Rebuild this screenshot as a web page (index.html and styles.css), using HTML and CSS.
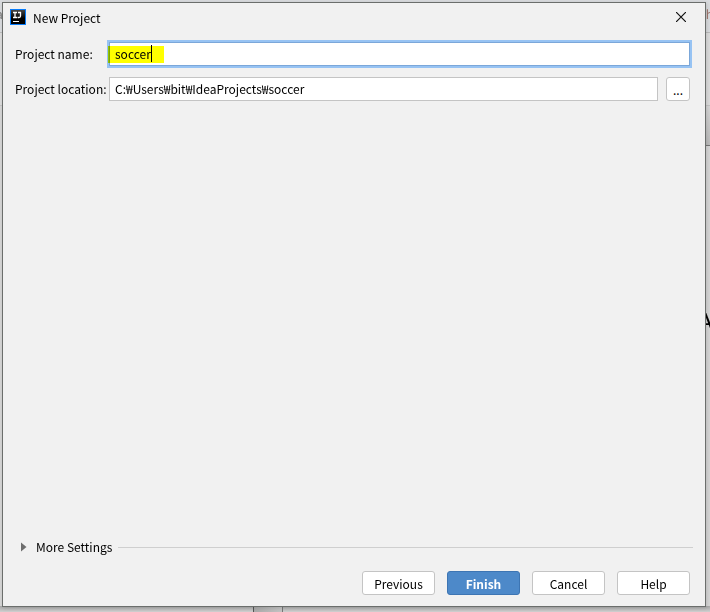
FILE: index.html
```html
<!DOCTYPE html>
<html lang="en">
<head>
  <meta charset="UTF-8">
  <title>New Project</title>
  <link rel="stylesheet" href="styles.css">
</head>
<body>

<!-- window behind the dialog -->
<div class="backdrop" aria-hidden="true">
  <span class="behind left-text">a</span>
  <span class="behind right-text">ch</span>
  <span class="behind big-text">A</span>
  <div class="band"></div>
  <div class="edge"></div>
  <div class="pane"></div>
</div>

<form class="dialog">
  <header class="titlebar">
    <svg class="logo" width="16" height="16" viewBox="0 0 16 16">
      <defs>
        <linearGradient id="logo-fill" x1="0" y1="0" x2="0" y2="1">
          <stop offset="0" stop-color="#444"/>
          <stop offset="0.6" stop-color="#000"/>
        </linearGradient>
      </defs>
      <rect width="16" height="16" fill="#087cfa"/>
      <rect x="1" y="1" width="14" height="14" fill="url(#logo-fill)"/>
      <path d="M3 3.500h4M5 3.500v5M3 8.500h4M8 3.500h3M10.500 3v4q0 1.500-1.500 1.500h-1.500" fill="none" stroke="#fff" stroke-width="1.300"/>
      <path d="M3 12.500h6" stroke="#fff"/>
    </svg>
    <h1>New Project</h1>
    <button type="button" class="close" aria-label="Close">
      <svg width="10" height="10" viewBox="0 0 10 10"><path d="M0 0L10 10M10 0L0 10" stroke="#111" stroke-width="1.200"/></svg>
    </button>
  </header>

  <div class="fields">
    <label for="name">Project name:</label>
    <div class="field">
      <input id="name" class="focused" type="text" value="soccer">
      <span class="marker"></span>
      <span class="caret"></span>
    </div>
    <label for="location">Project location:</label>
    <div class="field">
      <input id="location" type="text" value="C:₩Users₩bit₩IdeaProjects₩soccer">
      <button type="button" class="browse" aria-label="Browse">...</button>
    </div>
  </div>

  <div class="more">
    <button type="button" class="toggle">
      <svg width="6" height="10" viewBox="0 0 6 10"><path d="M0 0.500L5.500 5L0 9.500z" fill="#6e6e6e"/></svg>
      More Settings
    </button>
    <hr>
  </div>

  <footer class="actions">
    <button type="button">Previous</button>
    <button type="submit" class="primary">Finish</button>
    <button type="button">Cancel</button>
    <button type="button">Help</button>
  </footer>
</form>

</body>
</html>
```

FILE: styles.css
```css
* {
  box-sizing: border-box;
}
body {
  margin: 0;
  padding: 2px 4px 5px 2px;
  height: 100vh;
  display: flex;
  background: #d6d6d6;
  font-family: "Noto Sans CJK KR", "Noto Sans", sans-serif;
  font-size: 12px;
  line-height: 16px;
  color: #000;
}
button, input {
  font: inherit;
  color: inherit;
}

.backdrop {
  position: absolute;
  inset: 0;
  overflow: hidden;
  background: linear-gradient(#d9dbde 0 32px, #bcbcbc 32px 33px, #dcdcdc 33px 105px, #c4c4c4 105px 106px, #d6d6d6 106px);
}
.behind {
  position: absolute;
  color: #777;
}
.left-text {
  left: -4px;
  top: 6px;
}
.right-text {
  right: -3px;
  top: 6px;
  color: #a0766c;
}
.big-text {
  right: -3px;
  top: 307px;
  font-family: "Liberation Sans", sans-serif;
  font-size: 24px;
  line-height: 30px;
  color: #000;
}
.band {
  position: absolute;
  right: 0;
  top: 106px;
  width: 6px;
  height: 40px;
  background: linear-gradient(#d6d6d6, #bbb);
  border-bottom: 1px solid #777;
}
.edge {
  position: absolute;
  left: 0;
  right: 0;
  bottom: 0;
  height: 6px;
  background: linear-gradient(#a8a8a8, #d0d0d0);
}
.pane {
  position: absolute;
  left: 253px;
  bottom: 0;
  width: 30px;
  height: 6px;
  background: linear-gradient(90deg, #aaa, #c4c4c4);
  border-left: 1px solid #555;
  border-right: 1px solid #777;
}

.dialog {
  position: relative;
  flex: 1;
  display: flex;
  flex-direction: column;
  border: 1px solid #6b6e6c;
  background: #f1f1f1;
  box-shadow: 1px 1px 4px rgba(0, 0, 0, 0.15);
}
.titlebar {
  display: flex;
  align-items: center;
  height: 28px;
  padding: 0 15px 0 7px;
}
.titlebar h1 {
  flex: 1;
  margin: 0 0 0 7px;
  padding-top: 1px;
  font-size: 12px;
  font-weight: normal;
}
.close {
  display: flex;
  padding: 4px;
  border: none;
  background: none;
}

.fields {
  display: grid;
  grid-template-columns: 94px 1fr;
  row-gap: 11px;
  align-items: center;
  padding: 11px 15px 0 12px;
}
.field {
  position: relative;
  display: flex;
  gap: 8px;
}
.field input {
  flex: 1;
  min-width: 0;
  height: 24px;
  padding: 0 5px 2px;
  border: 1px solid #c4c4c4;
  background: #fff;
  outline: none;
}
.field .focused {
  border-color: #7ba7d9;
  box-shadow: 0 0 0 2px #97c3f3;
}
.marker {
  position: absolute;
  left: -1px;
  top: 4px;
  width: 56px;
  height: 17px;
  background: #ff0;
  mix-blend-mode: multiply;
}
.caret {
  position: absolute;
  left: 42px;
  top: 3px;
  width: 1px;
  height: 17px;
  background: #000;
}
.browse {
  width: 24px;
  height: 24px;
  padding: 2px 0 0;
  border: 1px solid #c4c4c4;
  border-radius: 3px;
  background: #fff;
}

.more {
  display: flex;
  align-items: center;
  gap: 6px;
  margin-top: auto;
  padding: 0 12px 0 18px;
}
.toggle {
  display: flex;
  align-items: center;
  gap: 9px;
  padding: 0;
  border: none;
  background: none;
}
.more hr {
  flex: 1;
  margin: 0;
  border: none;
  border-top: 1px solid #cfcfcf;
}

.actions {
  display: flex;
  justify-content: flex-end;
  gap: 12px;
  padding: 16px 15px 11px;
}
.actions button {
  width: 73px;
  height: 24px;
  padding: 2px 0 0;
  border: 1px solid #c4c4c4;
  border-radius: 3px;
  background: #fff;
}
.actions .primary {
  border-color: #3d75b3;
  background: #4d89c9;
  color: #fff;
  font-weight: bold;
}
```
